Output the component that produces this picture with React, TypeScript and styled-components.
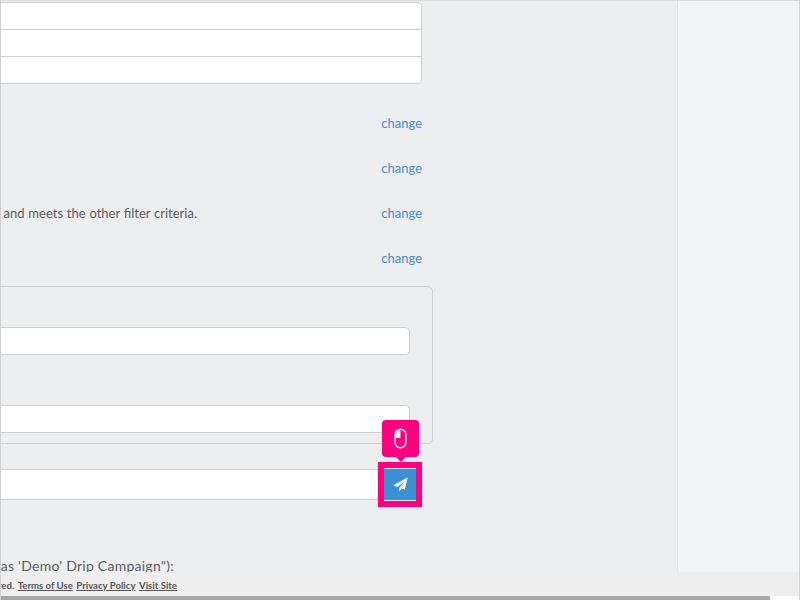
import React from "react";
import styled, { createGlobalStyle } from "styled-components";

const Global = createGlobalStyle`
  html, body { margin: 0; padding: 0; height: 100%; overflow: hidden; background: #fff; }
  * { box-sizing: border-box; }
`;

const Frame = styled.div`
  position: relative;
  width: 800px;
  height: 600px;
  overflow: hidden;
  display: flex;
  flex-direction: column;
  font-family: Lato, "Liberation Sans", sans-serif;
  color: #5c5c5c;
  background: #edeef0;
  border-left: 1px solid #d0d0d2;
  border-right: 1px solid #d4d4d6;
  border-top: 1px solid #dcdcde;
`;

const Workspace = styled.div`
  flex: 1;
  min-height: 0;
  display: flex;
  overflow: hidden;
`;

const Main = styled.main`
  width: 676px;
  flex: none;
  overflow: hidden;
`;

const Sidebar = styled.aside`
  flex: 1;
  background: #f3f4f6;
  border-left: 1px solid #e2e3e5;
`;

const Canvas = styled.div`
  width: 821px;
  margin-left: -400px;
  padding-top: 1px;
`;

const ListBox = styled.div`
  width: 821px;
  background: #fff;
  border: 1px solid #cfcfd1;
  border-radius: 5px;
`;

const ListRow = styled.div`
  height: 26px;
  & + & {
    height: 27px;
    border-top: 1px solid #cfcfd1;
  }
`;

const Settings = styled.div`
  width: 821px;
  margin-top: 17px;
  display: flex;
  flex-direction: column;
`;

const Setting = styled.div`
  height: 44.8px;
  display: flex;
  justify-content: space-between;
  align-items: center;
  font-size: 13px;
  white-space: nowrap;
`;

const SettingText = styled.span`
  width: 596px;
  text-align: right;
  word-spacing: 0.5px;
`;

const Change = styled.a`
  color: #4a8ccb;
  font-size: 13px;
`;

const Group = styled.div`
  width: 832px;
  height: 158px;
  margin-top: 6px;
  padding: 40px 22px 0 0;
  border: 1px solid #d0d0d2;
  border-radius: 5px;
  display: flex;
  flex-direction: column;
  gap: 50px;
`;

const Field = styled.div`
  width: 808px;
  height: 28px;
  background: #fff;
  border: 1px solid #cfcfd1;
  border-radius: 5px;
`;

const SendRow = styled.div`
  display: flex;
  width: 815px;
  margin-top: 25px;
`;

const SendInput = styled.div`
  flex: 1;
  height: 31px;
  background: #fff;
  border: 1px solid #cfcfd1;
`;

const SendButton = styled.button`
  position: relative;
  flex: none;
  width: 32px;
  height: 33px;
  padding: 0;
  margin: -1px 0;
  display: flex;
  align-items: center;
  justify-content: center;
  background: #3a92d4;
  border: none;
  border-top: 1px solid #dfeaf3;
  border-bottom: 1px solid #dfeaf3;
  outline: 6px solid #ff0080;
`;

const Tip = styled.div`
  position: absolute;
  left: -2px;
  top: -49px;
  width: 37px;
  height: 37px;
  background: #ff0080;
  border-radius: 4px;
  display: flex;
  align-items: center;
  justify-content: center;
  &::after {
    content: "";
    position: absolute;
    left: 13px;
    bottom: -5px;
    border-left: 6px solid transparent;
    border-right: 6px solid transparent;
    border-top: 6px solid #ff0080;
  }
`;

const Caption = styled.p`
  margin: 58px 0 0;
  text-align: right;
  padding-right: 248px;
  font-size: 14px;
  letter-spacing: 0.25px;
  white-space: nowrap;
  line-height: 16px;
`;

const Footer = styled.footer`
  height: 24px;
  flex: none;
  background: #eeeeee;
  overflow: hidden;
  font-size: 9.6px;
  font-weight: 700;
  line-height: 27px;
  white-space: nowrap;
  color: #555;
`;

const FooterInner = styled.div`
  width: 176px;
  display: flex;
  justify-content: flex-end;
  gap: 3.5px;
`;

const FooterLink = styled.a`
  color: #555;
  text-decoration: underline;
`;

const ScrollTrack = styled.div`
  height: 4px;
  flex: none;
  background: #fff;
`;

const ScrollThumb = styled.div`
  width: 769px;
  height: 100%;
  background: #a6a6a6;
`;

const PlaneIcon = () => (
  <svg width="15" height="15" viewBox="0 0 15 15" aria-hidden="true">
    <path d="M14.6.4 .4 8.2l4.3 1.7L12 3.6 6.2 11v3.4l2.4-2.9 3.2 1.3z" fill="#fff" />
  </svg>
);

const MouseIcon = () => (
  <svg width="13" height="21" viewBox="0 0 14 22" aria-hidden="true">
    <rect x="1.2" y="1" width="11.6" height="20" rx="5.8" fill="none" stroke="#fff" strokeWidth="1.6" />
    <path d="M2 10.5V6.8A4.9 4.9 0 0 1 6.9 2v8.5z" fill="#fff" />
  </svg>
);

export default function App() {
  return (
    <>
      <Global />
      <Frame>
        <Workspace>
          <Main>
            <Canvas>
              <ListBox>
                <ListRow />
                <ListRow />
                <ListRow />
              </ListBox>
              <Settings>
                <Setting>
                  <span />
                  <Change>change</Change>
                </Setting>
                <Setting>
                  <span />
                  <Change>change</Change>
                </Setting>
                <Setting>
                  <SettingText>Send to a contact when it is new and meets the other filter criteria.</SettingText>
                  <Change>change</Change>
                </Setting>
                <Setting>
                  <span />
                  <Change>change</Change>
                </Setting>
              </Settings>
              <Group>
                <Field />
                <Field />
              </Group>
              <SendRow>
                <SendInput />
                <SendButton aria-label="Send">
                  <PlaneIcon />
                  <Tip>
                    <MouseIcon />
                  </Tip>
                </SendButton>
              </SendRow>
              <Caption>as 'Demo' Drip Campaign"):</Caption>
            </Canvas>
          </Main>
          <Sidebar />
        </Workspace>
        <Footer>
          <FooterInner>
            <span>reserved.</span>
            <FooterLink>Terms of Use</FooterLink>
            <FooterLink>Privacy Policy</FooterLink>
            <FooterLink>Visit Site</FooterLink>
          </FooterInner>
        </Footer>
        <ScrollTrack>
          <ScrollThumb />
        </ScrollTrack>
      </Frame>
    </>
  );
}
